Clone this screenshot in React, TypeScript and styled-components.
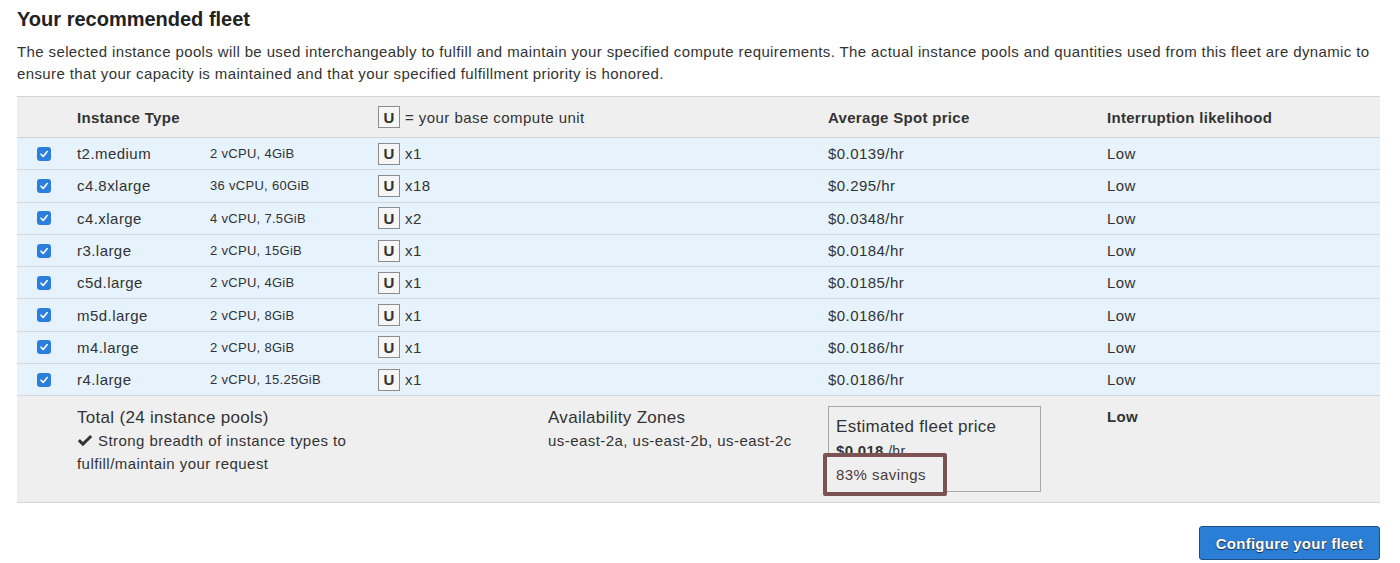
import React from 'react';
import styled, { createGlobalStyle } from 'styled-components';

/** Base da página: fonte sem serifa, sem margem padrão. */
const GlobalStyle = createGlobalStyle`
  html, body {
    margin: 0;
    padding: 0;
    background: #ffffff;
  }
  body {
    font-family: "Liberation Sans", Arial, Helvetica, sans-serif;
    color: #333333;
    letter-spacing: 0.45px;
  }
`;

const COLS = '60px 133px 168px 450px 279px 1fr';
const FOOT_COLS = '60px 471px 280px 279px 1fr';

interface Pool {
  name: string;
  spec: string;
  units: number;
  price: string;
  risk: string;
}

const pools: Pool[] = [
  { name: 't2.medium', spec: '2 vCPU, 4GiB', units: 1, price: '$0.0139/hr', risk: 'Low' },
  { name: 'c4.8xlarge', spec: '36 vCPU, 60GiB', units: 18, price: '$0.295/hr', risk: 'Low' },
  { name: 'c4.xlarge', spec: '4 vCPU, 7.5GiB', units: 2, price: '$0.0348/hr', risk: 'Low' },
  { name: 'r3.large', spec: '2 vCPU, 15GiB', units: 1, price: '$0.0184/hr', risk: 'Low' },
  { name: 'c5d.large', spec: '2 vCPU, 4GiB', units: 1, price: '$0.0185/hr', risk: 'Low' },
  { name: 'm5d.large', spec: '2 vCPU, 8GiB', units: 1, price: '$0.0186/hr', risk: 'Low' },
  { name: 'm4.large', spec: '2 vCPU, 8GiB', units: 1, price: '$0.0186/hr', risk: 'Low' },
  { name: 'r4.large', spec: '2 vCPU, 15.25GiB', units: 1, price: '$0.0186/hr', risk: 'Low' },
];

const Page = styled.div`
  padding: 7px 20px 0 17px;
`;

const Title = styled.h2`
  margin: 0;
  font-size: 20px;
  line-height: 24px;
  font-weight: bold;
  letter-spacing: 0;
  color: #222222;
`;

const Intro = styled.p`
  margin: 10px 0 11px;
  font-size: 15px;
  line-height: 22px;
  letter-spacing: 0.38px;
  color: #333333;
`;

const Table = styled.div`
  border-top: 1px solid #d5d5d5;
  border-bottom: 1px solid #d5d5d5;
`;

const HeadRow = styled.div`
  display: grid;
  grid-template-columns: ${COLS};
  align-items: center;
  height: 40px;
  background: #efefef;
  border-bottom: 1px solid #d3d3d3;
  font-size: 15px;
  font-weight: bold;
  letter-spacing: 0.3px;
  color: #333333;
`;

const Row = styled.div`
  display: grid;
  grid-template-columns: ${COLS};
  align-items: center;
  height: 31.3px;
  background: #e6f2fc;
  border-bottom: 1px solid #d3d8dd;
  font-size: 15px;
  color: #333333;
`;

const SpanCell = styled.div<{ $span?: number }>`
  grid-column: span ${p => p.$span ?? 1};
`;

const Cell = styled.div<{ $small?: boolean }>`
  font-size: ${p => (p.$small ? '13px' : '15px')};
  letter-spacing: ${p => (p.$small ? '0.3px' : '0.45px')};
  white-space: nowrap;
`;

const UnitCell = styled.div`
  display: flex;
  align-items: center;
  gap: 5px;
  font-weight: normal;
  letter-spacing: 0.45px;
`;

const UnitBox = styled.span`
  display: inline-flex;
  align-items: center;
  justify-content: center;
  width: 20px;
  height: 20px;
  border: 1px solid #8c8c8c;
  background: #f6f6f6;
  font-weight: bold;
  font-size: 15px;
  letter-spacing: 0;
  color: #333333;
`;

const CheckCell = styled.div`
  padding-left: 20px;
  display: flex;
  align-items: center;
`;

const CheckBox = styled.span`
  display: inline-flex;
  align-items: center;
  justify-content: center;
  width: 14px;
  height: 14px;
  border-radius: 3px;
  background: #2b7fdc;
`;

const Footer = styled.div`
  display: grid;
  grid-template-columns: ${FOOT_COLS};
  align-items: start;
  background: #efefef;
  padding: 10px 0;
`;

const FootBlock = styled.div`
  padding-top: 1px;
`;

const FootTitle = styled.div`
  font-size: 17px;
  line-height: 22px;
  letter-spacing: 0.3px;
  color: #333333;
`;

const FootText = styled.div`
  font-size: 15px;
  line-height: 23px;
  color: #333333;
`;

const Tick = styled.svg`
  width: 16px;
  height: 13px;
  margin-right: 5px;
  vertical-align: -1px;
`;

const PriceBox = styled.div`
  position: relative;
  height: 86px;
  width: 213px;
  box-sizing: border-box;
  border: 1px solid #a8a8a8;
  padding: 8px 7px 0;
`;

const PriceLabel = styled.div`
  font-size: 17px;
  line-height: 24px;
  letter-spacing: 0.3px;
`;

const PriceValue = styled.div`
  font-size: 15px;
  line-height: 24px;
  font-weight: bold;
  letter-spacing: 0.3px;

  span {
    font-weight: normal;
    font-size: 14px;
  }
`;

/** Marcação de destaque sobreposta (anotação do print). */
const Highlight = styled.div`
  position: absolute;
  left: -6px;
  top: 46px;
  width: 124px;
  height: 43px;
  box-sizing: border-box;
  border: 4px solid #7c5353;
  border-radius: 2px;
  background: #efefef;
  padding-left: 9px;
  display: flex;
  align-items: center;
  font-size: 15px;
  color: #4a3a3a;
`;

const RiskTotal = styled.div`
  font-size: 15px;
  font-weight: bold;
  line-height: 22px;
  letter-spacing: 0.3px;
`;

const Actions = styled.div`
  display: flex;
  justify-content: flex-end;
  padding-top: 23px;
`;

const PrimaryButton = styled.button`
  width: 181px;
  height: 34px;
  border: 1px solid #1d4f86;
  border-radius: 3px;
  background: #2b7ed6;
  color: #ffffff;
  font-family: "Liberation Sans", Arial, sans-serif;
  font-size: 15px;
  font-weight: bold;
  letter-spacing: 0.25px;
  text-shadow: 0 0 1px #1b2f4a, 0 1px 1px #1b2f4a;
  cursor: pointer;
`;

const Check = () => (
  <CheckBox>
    <svg width="10" height="10" viewBox="0 0 10 10">
      <path d="M2 5.2 L4.2 7.4 L8.2 2.6" fill="none" stroke="#fff" strokeWidth="1.6" strokeLinecap="round" strokeLinejoin="round" />
    </svg>
  </CheckBox>
);

export default function App() {
  return (
    <>
      <GlobalStyle />
      <Page>
        <Title>Your recommended fleet</Title>
        <Intro>
          The selected instance pools will be used interchangeably to fulfill and maintain your specified compute requirements. The actual instance pools and quantities used from this fleet are dynamic to ensure that your capacity is maintained and that your specified fulfillment priority is honored.
        </Intro>

        <Table>
          <HeadRow>
            <div />
            <SpanCell $span={2}>Instance Type</SpanCell>
            <UnitCell>
              <UnitBox>U</UnitBox>= your base compute unit
            </UnitCell>
            <div>Average Spot price</div>
            <div>Interruption likelihood</div>
          </HeadRow>

          {pools.map(p => (
            <Row key={p.name}>
              <CheckCell>
                <Check />
              </CheckCell>
              <Cell>{p.name}</Cell>
              <Cell $small>{p.spec}</Cell>
              <UnitCell>
                <UnitBox>U</UnitBox>x{p.units}
              </UnitCell>
              <Cell>{p.price}</Cell>
              <Cell>{p.risk}</Cell>
            </Row>
          ))}

          <Footer>
            <div />
            <FootBlock>
              <FootTitle>Total (24 instance pools)</FootTitle>
              <FootText>
                <Tick viewBox="0 0 16 13">
                  <path d="M0.8 7.2 L2.9 5.1 L5.9 8.1 L13.1 0.9 L15.2 3 L5.9 12.3 Z" fill="#333" />
                </Tick>
                Strong breadth of instance types to
              </FootText>
              <FootText>fulfill/maintain your request</FootText>
            </FootBlock>
            <FootBlock>
              <FootTitle>Availability Zones</FootTitle>
              <FootText>us-east-2a, us-east-2b, us-east-2c</FootText>
            </FootBlock>
            <PriceBox>
              <PriceLabel>Estimated fleet price</PriceLabel>
              <PriceValue>
                $0.018 <span>/hr</span>
              </PriceValue>
              <Highlight>83% savings</Highlight>
            </PriceBox>
            <RiskTotal>Low</RiskTotal>
          </Footer>
        </Table>

        <Actions>
          <PrimaryButton>Configure your fleet</PrimaryButton>
        </Actions>
      </Page>
    </>
  );
}
